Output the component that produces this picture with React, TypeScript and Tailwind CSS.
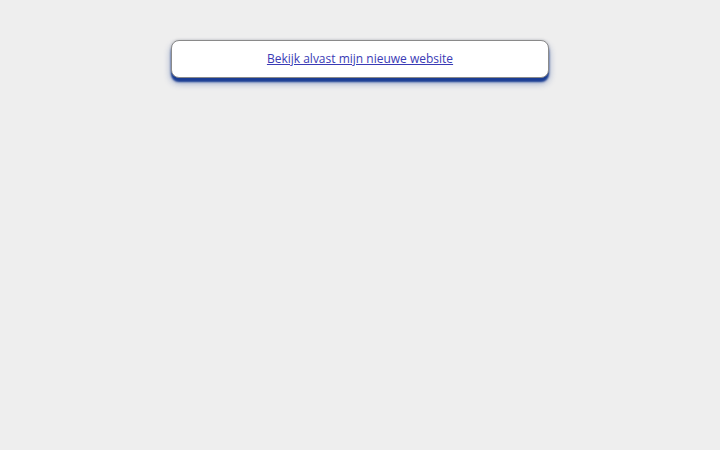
export default function App() {
  return (
    <div className="min-h-[450px] bg-[#eeeeee] pt-10 flex justify-center">
      <div className="w-[378px] h-[38px] bg-white border border-[#8a8a8a] rounded-lg shadow-[0_4px_2px_0_#1a3d93,0_5px_7px_0_rgba(26,61,147,0.45),0_0_3px_rgba(0,0,0,0.2)] flex items-center justify-center">
        <a
          href="#"
          className="text-[12px] text-[#3a3ab5] underline font-['Open_Sans',sans-serif]"
        >
          Bekijk alvast mijn nieuwe website
        </a>
      </div>
    </div>
  );
}
